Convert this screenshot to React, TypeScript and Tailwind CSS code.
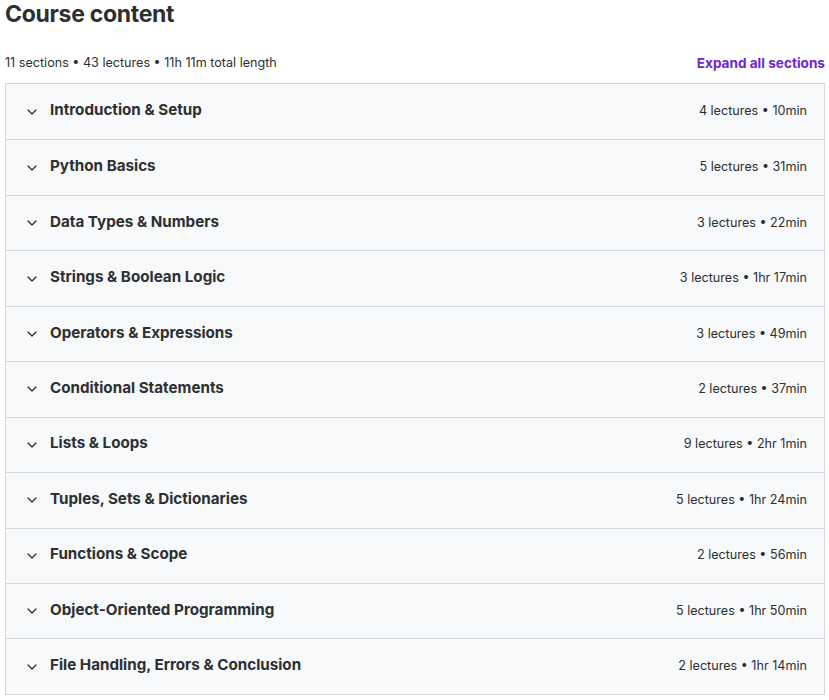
interface Section {
  title: string
  lectures: number
  length: string
}

const sections: Section[] = [
  { title: 'Introduction & Setup', lectures: 4, length: '10min' },
  { title: 'Python Basics', lectures: 5, length: '31min' },
  { title: 'Data Types & Numbers', lectures: 3, length: '22min' },
  { title: 'Strings & Boolean Logic', lectures: 3, length: '1hr 17min' },
  { title: 'Operators & Expressions', lectures: 3, length: '49min' },
  { title: 'Conditional Statements', lectures: 2, length: '37min' },
  { title: 'Lists & Loops', lectures: 9, length: '2hr 1min' },
  { title: 'Tuples, Sets & Dictionaries', lectures: 5, length: '1hr 24min' },
  { title: 'Functions & Scope', lectures: 2, length: '56min' },
  { title: 'Object-Oriented Programming', lectures: 5, length: '1hr 50min' },
  { title: 'File Handling, Errors & Conclusion', lectures: 2, length: '1hr 14min' },
]

function Chevron() {
  return (
    <svg width="10" height="6" viewBox="0 0 10 6" fill="none" className="shrink-0">
      <path d="M1 1 L5 5 L9 1" stroke="#2d2f31" strokeWidth="1.3" strokeLinecap="round" strokeLinejoin="round" />
    </svg>
  )
}

export default function App() {
  return (
    <div className="pl-[5px] pr-[4px] text-[#2d2f31] font-['Inter',sans-serif]">
      <h2 className="text-[23px] leading-7 font-bold tracking-[-0.3px]">Course content</h2>
      <div className="mt-[28px] flex items-center justify-between h-[15px]">
        <span className="text-[12.6px]">11 sections • 43 lectures • 11h 11m total length</span>
        <button className="text-[13.6px] font-bold text-[#6d28d2]">Expand all sections</button>
      </div>
      <div className="mt-[12px] border border-[#d1d7dc]">
        {sections.map((s, i) => (
          <div
            key={s.title}
            className={`flex items-center h-[55.45px] bg-[#f7f9fa] pl-[21px] pr-[17px] ${i > 0 ? 'border-t border-[#d1d7dc]' : ''}`}
          >
            <Chevron />
            <span className="ml-[13px] text-[15.2px] font-bold flex-1 pb-[2px]">{s.title}</span>
            <span className="text-[12.6px]">
              {s.lectures} lectures • {s.length}
            </span>
          </div>
        ))}
      </div>
    </div>
  )
}
